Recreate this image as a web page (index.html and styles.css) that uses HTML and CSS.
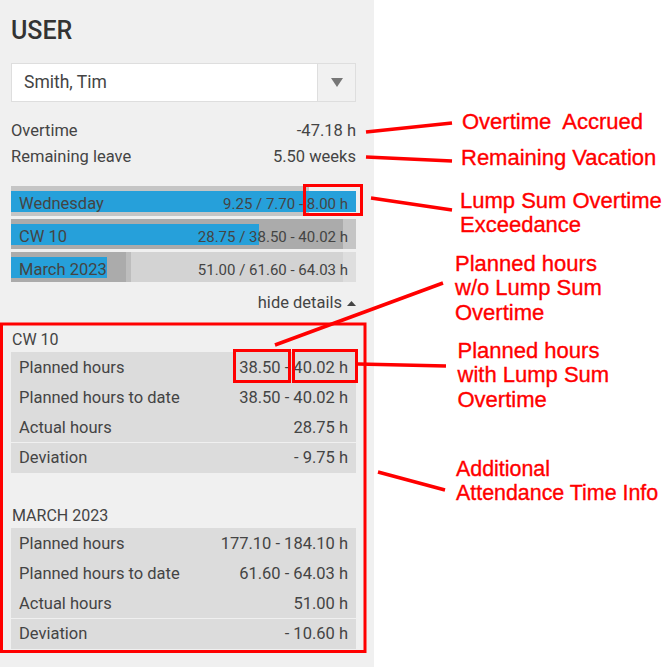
FILE: index.html
```html
<!DOCTYPE html>
<html lang="en">
<head>
<meta charset="utf-8">
<title>User attendance</title>
<link rel="stylesheet" href="styles.css">
</head>
<body>
<div class="page">
  <aside class="panel">
    <h1 class="title">USER</h1>
    <div class="select">
      <div class="select-value">Smith, Tim</div>
      <div class="select-toggle">
        <svg width="12" height="9" viewBox="0 0 12 9"><polygon points="0,0 12,0 6,9" fill="#777"/></svg>
      </div>
    </div>
    <div class="info">
      <div class="info-row"><span>Overtime</span><span>-47.18 h</span></div>
      <div class="info-row"><span>Remaining leave</span><span>5.50 weeks</span></div>
    </div>
    <div class="bars">
      <div class="bar">
        <div class="layer to-date-min" style="width:83.24%"></div>
        <div class="layer to-date-max-behind" style="width:86.49%"></div>
        <div class="layer actual" style="width:100%"></div>
        <div class="bar-text"><span class="bar-label">Wednesday</span><span class="bar-value">9.25 / 7.70 - 8.00 h</span></div>
      </div>
      <div class="bar">
        <div class="layer planned-max" style="width:100%"></div>
        <div class="layer planned-min" style="width:96.2%"></div>
        <div class="layer to-date-max-behind" style="width:100%"></div>
        <div class="layer to-date-min" style="width:96.2%"></div>
        <div class="layer actual" style="width:71.84%"></div>
        <div class="bar-text"><span class="bar-label">CW 10</span><span class="bar-value">28.75 / 38.50 - 40.02 h</span></div>
      </div>
      <div class="bar">
        <div class="layer planned-max" style="width:100%"></div>
        <div class="layer planned-min" style="width:96.2%"></div>
        <div class="layer to-date-max" style="width:34.78%"></div>
        <div class="layer to-date-min" style="width:33.46%"></div>
        <div class="layer actual" style="width:27.7%"></div>
        <div class="bar-text"><span class="bar-label">March 2023</span><span class="bar-value">51.00 / 61.60 - 64.03 h</span></div>
      </div>
    </div>
    <div class="toggle">hide details
      <svg width="9" height="5" viewBox="0 0 9 5"><polygon points="0,5 9,5 4.5,0" fill="#444"/></svg>
    </div>
    <section class="details">
      <h2 class="details-title">CW 10</h2>
      <div class="table">
        <div class="row"><span>Planned hours</span><span>38.50 - 40.02 h</span></div>
        <div class="row"><span>Planned hours to date</span><span>38.50 - 40.02 h</span></div>
        <div class="row"><span>Actual hours</span><span>28.75 h</span></div>
        <div class="row total"><span>Deviation</span><span>- 9.75 h</span></div>
      </div>
    </section>
    <section class="details details-month">
      <h2 class="details-title">MARCH 2023</h2>
      <div class="table">
        <div class="row"><span>Planned hours</span><span>177.10 - 184.10 h</span></div>
        <div class="row"><span>Planned hours to date</span><span>61.60 - 64.03 h</span></div>
        <div class="row"><span>Actual hours</span><span>51.00 h</span></div>
        <div class="row total"><span>Deviation</span><span>- 10.60 h</span></div>
      </div>
    </section>
  </aside>
</div>

<div class="annotations">
  <svg class="marks" width="662" height="667" viewBox="0 0 662 667">
    <g fill="none" stroke="#ff0000" stroke-width="3">
      <rect x="304.5" y="185.5" width="57" height="29"/>
      <rect x="234.5" y="350.5" width="55" height="31"/>
      <rect x="293.5" y="350.5" width="63" height="31"/>
      <rect x="1.5" y="324" width="363.5" height="327.5"/>
    </g>
    <g stroke="#ff0000" stroke-width="3.5">
      <line x1="366" y1="132" x2="452" y2="123"/>
      <line x1="366" y1="157" x2="452" y2="161"/>
      <line x1="371" y1="198" x2="452" y2="210"/>
      <line x1="275" y1="345" x2="443" y2="283"/>
      <line x1="358" y1="364" x2="446" y2="366"/>
      <line x1="378" y1="472" x2="445" y2="490"/>
    </g>
  </svg>
  <div class="note note-overtime">Overtime&nbsp; Accrued</div>
  <div class="note note-vacation">Remaining Vacation</div>
  <div class="note note-lump">Lump Sum Overtime<br>Exceedance</div>
  <div class="note note-without">Planned hours<br>w/o Lump Sum<br>Overtime</div>
  <div class="note note-with">Planned hours<br>with Lump Sum<br>Overtime</div>
  <div class="note note-additional">Additional<br>Attendance Time Info</div>
</div>
</body>
</html>
```

FILE: styles.css
```css
html, body {
  margin: 0;
  padding: 0;
  background: #ffffff;
}

body {
  font-family: Roboto, "Noto Sans", sans-serif;
  color: #444444;
  position: relative;
  width: 662px;
  height: 667px;
  overflow: hidden;
}

.page {
  display: flex;
  height: 667px;
}

.panel {
  width: 374px;
  box-sizing: border-box;
  padding: 16px 18px 0 11px;
  background: #f0f0f0;
  display: flex;
  flex-direction: column;
}

.title {
  margin: 0;
  font-size: 25px;
  line-height: 30px;
  font-weight: 500;
  color: #333333;
}

.select {
  margin-top: 17px;
  height: 39px;
  box-sizing: border-box;
  display: flex;
  background: #ffffff;
  border: 1px solid #dedede;
}

.select-value {
  flex: 1;
  padding-left: 12px;
  font-size: 17.5px;
  line-height: 37px;
  color: #444444;
}

.select-toggle {
  width: 38px;
  box-sizing: border-box;
  border-left: 1px solid #dedede;
  background: #f1f1f1;
  display: flex;
  align-items: center;
  justify-content: center;
}

.info {
  margin-top: 16px;
  display: flex;
  flex-direction: column;
}

.info-row {
  display: flex;
  justify-content: space-between;
  font-size: 16.5px;
  line-height: 26px;
  height: 26px;
}

.bars {
  margin-top: 16px;
  display: flex;
  flex-direction: column;
  gap: 3px;
}

.bar {
  position: relative;
  height: 30px;
}

.layer {
  position: absolute;
  left: 0;
  top: 0;
  height: 30px;
}

.planned-max { background: #dedede; }
.planned-min { background: #d3d3d3; }
.to-date-max { background: #bdbdbd; }
.to-date-max-behind { background: #c5c5c5; }
.to-date-min { background: #ababab; }

.actual {
  top: 5px;
  height: 21px;
  background: #26a0da;
}

.bar-text {
  position: relative;
  display: flex;
  justify-content: space-between;
  align-items: baseline;
  box-sizing: border-box;
  height: 30px;
  padding: 6px 8px 0 8px;
  line-height: 24px;
  color: #444444;
}

.bar-label {
  font-size: 16.5px;
}

.bar-value {
  font-size: 15px;
}

.toggle {
  margin-top: 8px;
  display: flex;
  justify-content: flex-end;
  align-items: center;
  gap: 5px;
  font-size: 16.5px;
  line-height: 26px;
  height: 26px;
}

.details {
  margin-top: 14px;
  display: flex;
  flex-direction: column;
}

.details-month {
  margin-top: 33px;
}

.details-title {
  margin: 0 0 2px 1px;
  font-size: 16px;
  line-height: 20px;
  font-weight: 400;
  color: #444444;
}

.table {
  background: #dcdcdc;
  display: flex;
  flex-direction: column;
}

.row {
  display: flex;
  justify-content: space-between;
  height: 30px;
  box-sizing: border-box;
  padding: 1px 8px 0 8px;
  font-size: 16.5px;
  line-height: 29px;
}

.row.total {
  height: 31px;
  border-top: 1px solid #f0f0f0;
  padding-top: 0;
}

.annotations {
  position: absolute;
  left: 0;
  top: 0;
  width: 662px;
  height: 667px;
  pointer-events: none;
}

.marks {
  position: absolute;
  left: 0;
  top: 0;
}

.note {
  position: absolute;
  font-family: "Liberation Sans", Arial, sans-serif;
  font-size: 22px;
  line-height: 24.3px;
  color: #ff0000;
  -webkit-text-stroke: 0.35px #ff0000;
  white-space: nowrap;
}

.note-overtime { left: 462px; top: 110px; }
.note-vacation { left: 461px; top: 146px; }
.note-lump { left: 460px; top: 189px; }
.note-without { left: 455px; top: 252px; }
.note-with { left: 457.5px; top: 339px; }
.note-additional { left: 456px; top: 456.5px; font-size: 21.4px; }
```
